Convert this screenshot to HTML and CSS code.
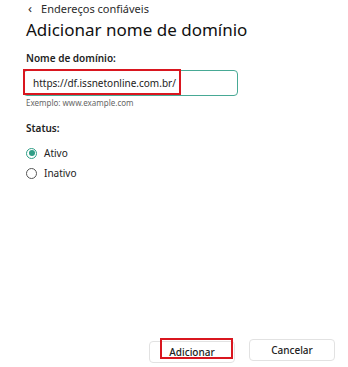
FILE: index.html
```html
<!DOCTYPE html>
<html lang="pt">
<head>
    <meta charset="UTF-8">
    <meta name="viewport" content="width=device-width, initial-scale=1.0">
    <title>Adicionar nome de domínio</title>
    <link rel="stylesheet" href="styles.css">
</head>
<body>
    <div class="page">
        <div class="breadcrumb">
            <span class="back">&lsaquo;</span>
            <span>Endereços confiáveis</span>
        </div>
        <h1>Adicionar nome de domínio</h1>

        <div class="field">
            <label for="domain">Nome de domínio:</label>
            <div class="input-wrap">
                <input type="text" id="domain" value="https://df.issnetonline.com.br/">
                <div class="mark mark-input"></div>
            </div>
            <div class="hint">Exemplo: www.example.com</div>
        </div>

        <div class="field status">
            <div class="label">Status:</div>
            <label class="radio">
                <span class="dot checked"></span>
                <span>Ativo</span>
            </label>
            <label class="radio">
                <span class="dot"></span>
                <span>Inativo</span>
            </label>
        </div>

        <div class="actions">
            <div class="btn-wrap">
                <button class="btn">Adicionar</button>
                <div class="mark mark-btn"></div>
            </div>
            <button class="btn">Cancelar</button>
        </div>
    </div>
</body>
</html>
```

FILE: styles.css
```css
* {
    box-sizing: border-box;
    font-family: "Noto Sans", "Open Sans", sans-serif;
}
html, body {
    height: 100%;
}
body {
    margin: 0;
    background-color: #ffffff;
    color: #1f1f1f;
}
.page {
    height: 100%;
    display: flex;
    flex-direction: column;
    padding: 0 13px 4px 26px;
}
.breadcrumb {
    display: flex;
    align-items: center;
    gap: 9px;
    font-size: 11px;
    color: #2b2b2b;
    margin-top: 1px;
    height: 14px;
}
.back {
    font-size: 13px;
    margin-left: 2px;
    line-height: 1;
}
h1 {
    margin: 3px 0 0;
    font-size: 17px;
    font-weight: 400;
    line-height: 24px;
    color: #111;
}
.field {
    margin-top: 9px;
}
.field label,
.field .label {
    display: block;
    font-size: 10px;
    font-weight: 600;
    color: #222;
    margin-bottom: 5px;
}
.input-wrap {
    position: relative;
    width: 215px;
    margin-left: -3px;
}
input {
    width: 100%;
    height: 26px;
    padding: 0 9px;
    border: 1px solid #48a995;
    border-radius: 4px;
    font-size: 10px;
    color: #222;
    outline: none;
}
.hint {
    margin-top: 1px;
    font-size: 8px;
    color: #666;
}
.mark {
    position: absolute;
    border: 2px solid #d9161f;
}
.mark-input {
    left: 0;
    top: -1px;
    width: 158px;
    height: 26px;
}
.status {
    margin-top: 13px;
}
.status .label {
    margin-bottom: 11px;
}
.radio {
    display: flex !important;
    align-items: center;
    gap: 7px;
    font-size: 10px !important;
    font-weight: 400 !important;
    color: #222 !important;
    margin-bottom: 6px !important;
}
.dot {
    width: 11px;
    height: 11px;
    border: 1px solid #555;
    border-radius: 50%;
    display: inline-flex;
    align-items: center;
    justify-content: center;
}
.dot.checked {
    border-color: #2f9e86;
}
.dot.checked::after {
    content: "";
    width: 6px;
    height: 6px;
    border-radius: 50%;
    background-color: #2f9e86;
}
.actions {
    margin-top: auto;
    display: flex;
    justify-content: flex-end;
    gap: 14px;
}
.btn-wrap {
    position: relative;
}
.btn {
    width: 86px;
    height: 22px;
    background-color: #ffffff;
    border: 1px solid #e2e2e2;
    border-radius: 4px;
    font-size: 10px;
    font-weight: 500;
    color: #222;
    cursor: pointer;
}
.mark-btn {
    left: 11px;
    top: -1px;
    width: 73px;
    height: 21px;
}
```
